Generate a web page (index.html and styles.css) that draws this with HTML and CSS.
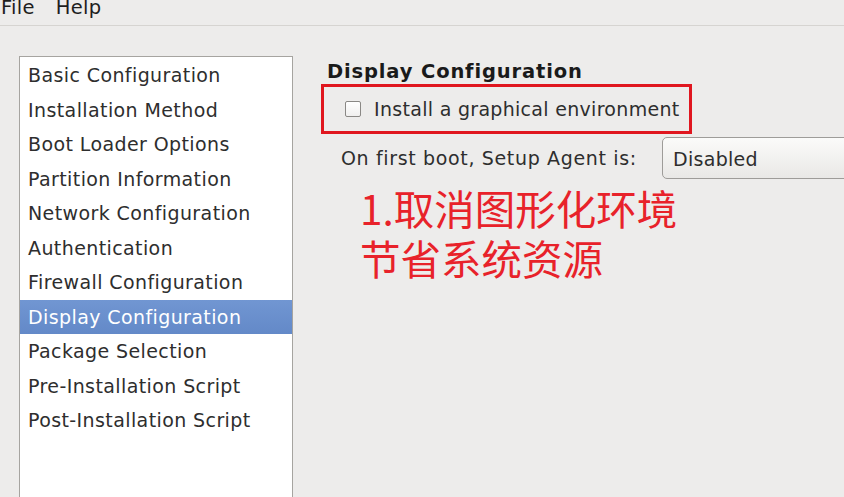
FILE: index.html
```html
<!DOCTYPE html>
<html>
<head>
<meta charset="utf-8">
<link rel="stylesheet" href="styles.css">
</head>
<body>
<div class="menubar">
  <span class="menu menu-file">File</span>
  <span class="menu">Help</span>
</div>
<div class="main">
  <ul class="list">
    <li>Basic Configuration</li>
    <li>Installation Method</li>
    <li>Boot Loader Options</li>
    <li>Partition Information</li>
    <li>Network Configuration</li>
    <li>Authentication</li>
    <li>Firewall Configuration</li>
    <li class="selected">Display Configuration</li>
    <li>Package Selection</li>
    <li>Pre-Installation Script</li>
    <li>Post-Installation Script</li>
  </ul>
  <div class="panel">
    <div class="heading">Display Configuration</div>
    <div class="highlight">
      <span class="checkbox"></span>
      <span class="label">Install a graphical environment</span>
    </div>
    <div class="agent-row">
      <span class="label agent-label">On first boot, Setup Agent is:</span>
      <div class="combo">Disabled</div>
    </div>
    <div class="note">
      <div>1.取消图形化环境</div>
      <div>节省系统资源</div>
    </div>
  </div>
</div>
</body>
</html>
```
FILE: styles.css
```css
html, body {
  margin: 0;
  padding: 0;
  background: #edeceb;
  overflow: hidden;
  height: 497px;
}
body {
  font-family: "DejaVu Sans", sans-serif;
  color: #2e2e2e;
  font-size: 19px;
  letter-spacing: 0.3px;
}
.menubar {
  height: 25px;
  border-bottom: 1px solid #d6d4d1;
  display: flex;
  align-items: flex-start;
  gap: 21px;
  font-size: 19.5px;
  line-height: 18px;
  color: #1e1e1e;
}
.menu {
  margin-top: -1px;
}
.menu-file {
  margin-left: 1px;
}
.main {
  display: flex;
  padding: 30px 0 0 19px;
}
.list {
  list-style: none;
  margin: 0;
  padding: 1px 0 0 0;
  width: 272px;
  height: 460px;
  background: #ffffff;
  border: 1px solid #a6a4a0;
  flex: none;
  letter-spacing: 0.4px;
}
.list li {
  height: 34.5px;
  line-height: 34.5px;
  padding-left: 8px;
  white-space: nowrap;
}
.list li.selected {
  background: linear-gradient(#7196d2, #6389c8);
  color: #ffffff;
}
.panel {
  padding-left: 28px;
  display: flex;
  flex-direction: column;
  flex: 1;
}
.heading {
  font-weight: bold;
  font-size: 19.5px;
  letter-spacing: 0.85px;
  padding-left: 6px;
  line-height: 28px;
  margin-top: 2px;
  margin-bottom: -2px;
  color: #1a1a1a;
}
.highlight {
  width: 365px;
  height: 44px;
  border: 3px solid #e0161f;
  display: flex;
  align-items: center;
  box-sizing: content-box;
}
.checkbox {
  width: 14px;
  height: 14px;
  border: 1px solid #8a8885;
  border-radius: 2px;
  background: linear-gradient(#ffffff, #f0efee);
  margin-left: 21px;
  margin-right: 13px;
}
.agent-row {
  display: flex;
  align-items: center;
  margin-top: 3px;
  padding-left: 20px;
}
.agent-label {
  width: 321px;
  flex: none;
  letter-spacing: 0.65px;
}
.combo {
  flex: none;
  width: 220px;
  height: 42px;
  line-height: 42px;
  border: 1px solid #9e9c99;
  border-radius: 5px;
  background: linear-gradient(#fbfbfa, #e9e8e6);
  padding-left: 10px;
  box-sizing: border-box;
}
.note {
  font-family: "Noto Sans CJK SC", sans-serif;
  font-size: 40.5px;
  line-height: 50px;
  letter-spacing: 0;
  color: #e8222a;
  padding-left: 39px;
  margin-top: 4px;
}
```
